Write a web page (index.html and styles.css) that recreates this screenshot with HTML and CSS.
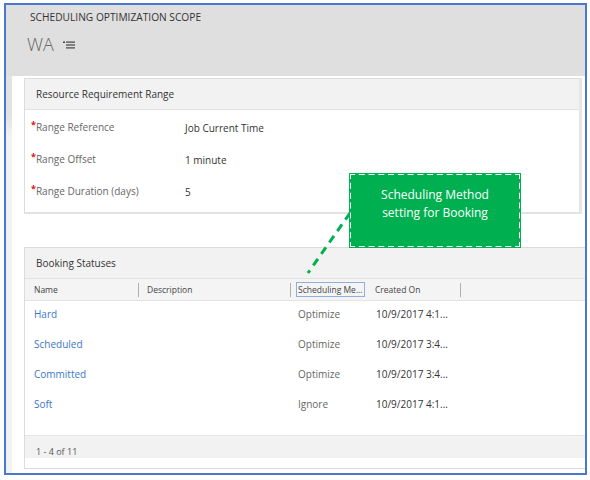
FILE: index.html
```html
<!DOCTYPE html>
<html>
<head>
<meta charset="utf-8">
<link rel="stylesheet" href="styles.css">
</head>
<body>
<div class="frame">
  <div class="topbar">
    <div class="scope">SCHEDULING OPTIMIZATION SCOPE</div>
    <div class="title">
      <span class="wa">WA</span>
      <svg class="menu-icon" width="12" height="8" viewBox="0 0 12 8">
        <rect x="0" y="0.5" width="2" height="1.5" fill="#444"/>
        <rect x="3" y="0.5" width="9" height="1.2" fill="#444"/>
        <rect x="3" y="3.4" width="9" height="1.2" fill="#444"/>
        <rect x="3" y="6.3" width="9" height="1.2" fill="#444"/>
      </svg>
    </div>
  </div>
  <div class="content">
    <div class="strip"></div>
    <div class="panel">
      <section class="card card-range">
        <div class="card-head">Resource Requirement Range</div>
        <div class="fields">
          <div class="field"><span class="label"><span class="req">*</span>Range Reference</span><span class="value">Job Current Time</span></div>
          <div class="field"><span class="label"><span class="req">*</span>Range Offset</span><span class="value">1 minute</span></div>
          <div class="field"><span class="label"><span class="req">*</span>Range Duration (days)</span><span class="value">5</span></div>
        </div>
      </section>
      <section class="card card-status">
        <div class="card-head">Booking Statuses</div>
        <div class="cols">
          <div class="col c-name">Name</div>
          <div class="col c-desc">Description</div>
          <div class="col c-method"><span class="focus">Scheduling Me...</span></div>
          <div class="col c-created">Created On</div>
        </div>
        <div class="rows">
          <div class="row"><a class="c-name link">Hard</a><span class="c-desc"></span><span class="c-method muted">Optimize</span><span class="c-created">10/9/2017 4:1...</span></div>
          <div class="row"><a class="c-name link">Scheduled</a><span class="c-desc"></span><span class="c-method muted">Optimize</span><span class="c-created">10/9/2017 3:4...</span></div>
          <div class="row"><a class="c-name link">Committed</a><span class="c-desc"></span><span class="c-method muted">Optimize</span><span class="c-created">10/9/2017 3:4...</span></div>
          <div class="row"><a class="c-name link">Soft</a><span class="c-desc"></span><span class="c-method muted">Ignore</span><span class="c-created">10/9/2017 4:1...</span></div>
        </div>
        <div class="footer">1 - 4 of 11</div>
      </section>
    </div>
  </div>
  <svg class="pointer" width="60" height="70" viewBox="0 0 60 70">
    <line x1="52" y1="7" x2="10" y2="67" stroke="#00b050" stroke-width="3" stroke-dasharray="8 6"/>
  </svg>
  <div class="callout">Scheduling Method<br>setting for Booking</div>
</div>
</body>
</html>
```
FILE: styles.css
```css
html, body {
  margin: 0;
  padding: 0;
  background: #ffffff;
}
body {
  font-family: "Open Sans", "Noto Sans", sans-serif;
  color: #333;
}
.frame {
  position: relative;
  margin: 3px 0 0 4px;
  width: 579px;
  height: 468px;
  border: 2px solid #4a78cf;
  overflow: hidden;
  display: flex;
  flex-direction: column;
  background: #fff;
}
.topbar {
  height: 71px;
  background: #dfdfdf;
  padding-left: 24px;
  box-sizing: border-box;
  flex: none;
}
.scope {
  font-size: 10.2px;
  font-weight: 500;
  color: #333;
  padding-top: 5px;
  line-height: 14px;
}
.title {
  display: flex;
  align-items: center;
  margin-top: 10px;
  margin-left: -3px;
}
.wa {
  font-size: 18px;
  font-weight: 300;
  color: #666;
  line-height: 20px;
}
.menu-icon {
  margin-left: 9px;
  margin-top: 1px;
}
.content {
  flex: 1;
  display: flex;
  min-height: 0;
}
.strip {
  width: 6px;
  flex: none;
  background: linear-gradient(#e2e2e2 0, #e2e2e2 40px, #f2f2f2 60px, #f2f2f2 100%);
}
.panel {
  flex: 1;
  background: #fff;
  padding: 2px 0 0 12px;
  display: flex;
  flex-direction: column;
  min-width: 0;
}
.card {
  border: 1px solid #dcdcdc;
  background: #fff;
  box-sizing: border-box;
}
.card-range {
  width: 558px;
  height: 136px;
  flex: none;
  border-right: 3px solid #e6e6e6;
  border-bottom: 2px solid #e3e3e3;
}
.card-head {
  height: 30px;
  flex: none;
  background: #f2f2f2;
  border-bottom: 1px solid #e2e2e2;
  font-size: 10px;
  font-weight: 500;
  color: #333;
  padding-left: 11px;
  display: flex;
  align-items: center;
}
.fields {
  padding-top: 1px;
}
.field {
  height: 32px;
  display: flex;
  align-items: center;
  font-size: 10px;
}
.label {
  width: 154px;
  padding-left: 6px;
  color: #666;
  margin-top: -3px;
}
.req {
  color: #e01010;
  font-weight: 700;
  font-size: 9px;
  vertical-align: 3px;
}
.value {
  color: #333;
  margin-top: 2px;
}
.card-status {
  margin-top: 33px;
  width: 570px;
  height: 222px;
  flex: none;
  border-right: none;
  display: flex;
  flex-direction: column;
}
.cols {
  height: 22px;
  flex: none;
  background: #f4f4f4;
  border-bottom: 1px solid #e4e4e4;
  display: flex;
  align-items: center;
  font-size: 8.5px;
  color: #444;
  box-sizing: border-box;
}
.col {
  display: flex;
  align-items: center;
  height: 14px;
  box-sizing: border-box;
  white-space: nowrap;
}
.col.c-desc, .col.c-method {
  border-left: 1px solid #b0b0b0;
}
.col.c-name { width: 113px; padding-left: 9px; }
.col.c-desc { width: 152px; padding-left: 8px; }
.col.c-method { width: 78px; padding-left: 6px; }
.col.c-created { width: 93px; padding-left: 7px; border-right: 1px solid #b0b0b0; }
.focus {
  border: 1px solid #8fb0df;
  padding: 1px;
  margin-left: -1px;
  white-space: nowrap;
}
.rows {
  flex: 1;
  display: flex;
  flex-direction: column;
}
.row {
  height: 30px;
  display: flex;
  align-items: center;
  font-size: 10px;
  margin-top: -2px;
  margin-bottom: 2px;
}
.row > span, .row > a {
  display: block;
  box-sizing: border-box;
  flex: none;
}
.row .c-name { width: 113px; padding-left: 9px; }
.row .c-desc { width: 152px; }
.row .c-method { width: 78px; padding-left: 8px; }
.row .c-created { padding-left: 8px; color: #333; }
.link {
  color: #3a78c8;
}
.muted {
  color: #666;
}
.footer {
  height: 23px;
  flex: none;
  margin-bottom: 10px;
  background: #f2f2f2;
  border-top: 1px solid #e6e6e6;
  font-size: 9px;
  color: #555;
  padding-left: 11px;
  display: flex;
  align-items: flex-end;
  box-sizing: border-box;
}
.callout {
  position: absolute;
  left: 343px;
  top: 168px;
  width: 172px;
  height: 75px;
  box-sizing: border-box;
  background: #00b050;
  border: 2px dashed #ffffff;
  outline: 1px solid #00b050;
  outline-offset: -1px;
  color: #fff;
  font-size: 12px;
  line-height: 18px;
  text-align: center;
  padding-top: 11px;
}
.pointer {
  position: absolute;
  left: 292px;
  top: 201px;
}
```
